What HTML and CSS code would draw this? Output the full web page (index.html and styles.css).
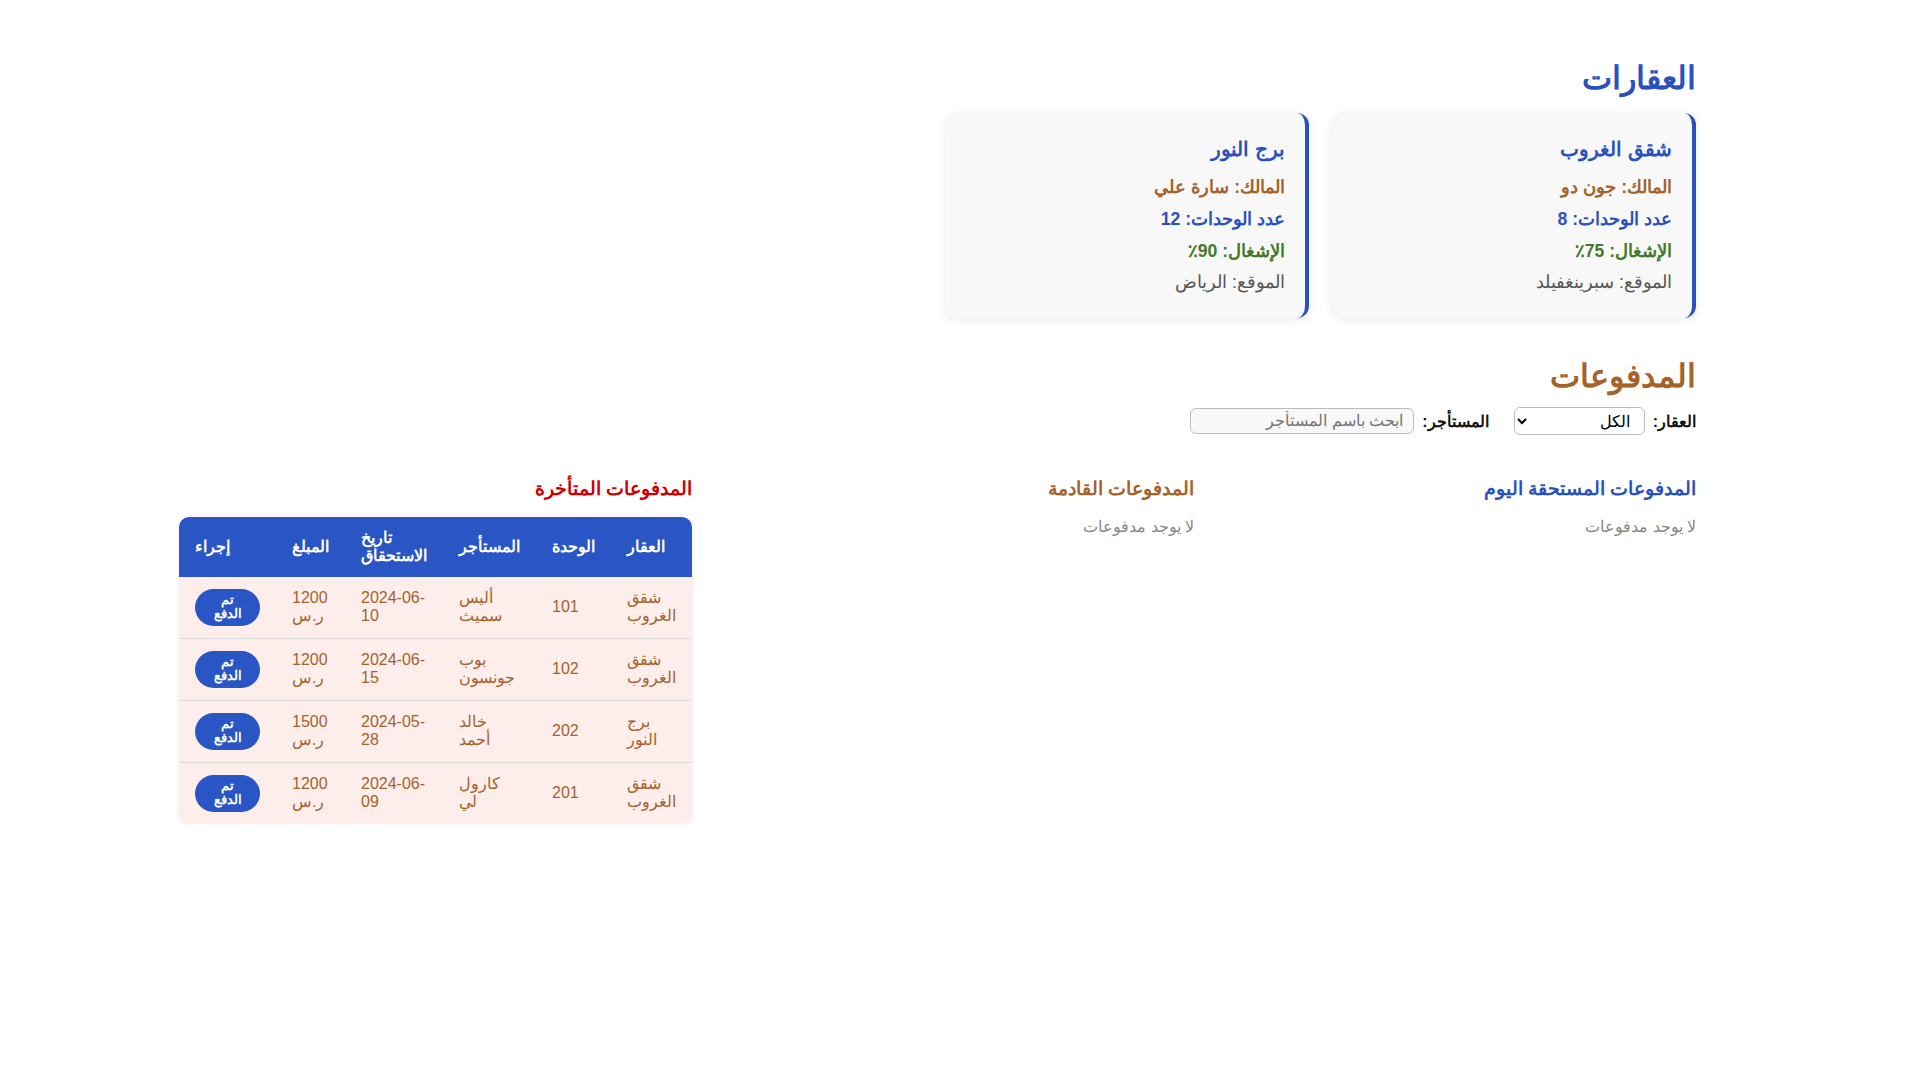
FILE: index.html
```html
<!DOCTYPE html>
<html lang="ar" dir="rtl">
<head>
  <meta charset="UTF-8">
  <meta name="viewport" content="width=device-width, initial-scale=1.0">
  <title>إدارة العقارات</title>
  <link rel="stylesheet" href="styles.css">
</head>
<body>

  <div class="container">
    <!-- Properties -->
    <h1 class="page-title">العقارات</h1>
    <div class="property-list">
      <div class="property-card">
        <h3>شقق الغروب</h3>
        <p class="owner">المالك: جون دو</p>
        <p class="units">عدد الوحدات: 8</p>
        <p class="occupancy">الإشغال: 75٪</p>
        <p class="location">الموقع: سبرينغفيلد</p>
      </div>
      <div class="property-card">
        <h3>برج النور</h3>
        <p class="owner">المالك: سارة علي</p>
        <p class="units">عدد الوحدات: 12</p>
        <p class="occupancy">الإشغال: 90٪</p>
        <p class="location">الموقع: الرياض</p>
      </div>
    </div>

    <!-- Payments -->
    <h2 class="section-title">المدفوعات</h2>
    <div class="filters">
      <div class="filter">
        <label for="propertyFilter">العقار:</label>
        <select id="propertyFilter">
          <option>الكل</option>
          <option>شقق الغروب</option>
          <option>برج النور</option>
        </select>
      </div>
      <div class="filter">
        <label for="tenantSearch">المستأجر:</label>
        <input type="text" id="tenantSearch" placeholder="ابحث باسم المستأجر">
      </div>
    </div>

    <div class="payments-grid">
      <div class="payments-col">
        <h3 class="col-title due">المدفوعات المستحقة اليوم</h3>
        <p class="empty">لا يوجد مدفوعات</p>
      </div>
      <div class="payments-col">
        <h3 class="col-title upcoming">المدفوعات القادمة</h3>
        <p class="empty">لا يوجد مدفوعات</p>
      </div>
      <div class="payments-col">
        <h3 class="col-title overdue">المدفوعات المتأخرة</h3>
        <table class="payments-table">
          <thead>
            <tr>
              <th>العقار</th>
              <th>الوحدة</th>
              <th>المستأجر</th>
              <th>تاريخ الاستحقاق</th>
              <th>المبلغ</th>
              <th>إجراء</th>
            </tr>
          </thead>
          <tbody>
            <tr>
              <td>شقق الغروب</td>
              <td>101</td>
              <td>أليس سميث</td>
              <td>2024-06-10</td>
              <td>1200 ر.س</td>
              <td><button class="pay-btn">تم الدفع</button></td>
            </tr>
            <tr>
              <td>شقق الغروب</td>
              <td>102</td>
              <td>بوب جونسون</td>
              <td>2024-06-15</td>
              <td>1200 ر.س</td>
              <td><button class="pay-btn">تم الدفع</button></td>
            </tr>
            <tr>
              <td>برج النور</td>
              <td>202</td>
              <td>خالد أحمد</td>
              <td>2024-05-28</td>
              <td>1500 ر.س</td>
              <td><button class="pay-btn">تم الدفع</button></td>
            </tr>
            <tr>
              <td>شقق الغروب</td>
              <td>201</td>
              <td>كارول لي</td>
              <td>2024-06-09</td>
              <td>1200 ر.س</td>
              <td><button class="pay-btn">تم الدفع</button></td>
            </tr>
          </tbody>
        </table>
      </div>
    </div>
  </div>

</body>
</html>
```

FILE: styles.css
```css
body, html {
  margin: 0;
  padding: 0;
  font-family: Arial, sans-serif;
  background: #fff;
  color: #222;
}

.container {
  width: 1472px;
  margin: 0 auto;
  padding-top: 59px;
}

.page-title {
  margin: 0 0 16px;
  font-size: 32px;
  line-height: 1.2;
  color: #2a52be;
}

/* Property cards */
.property-list {
  display: flex;
  gap: 23px;
}

.property-card {
  width: 364px;
  box-sizing: border-box;
  padding: 20px 20px 16px;
  background: #f8f8f8;
  border-right: 4px solid #2a52be;
  border-radius: 12px;
  box-shadow: 0 2px 10px rgba(0, 0, 0, 0.08);
}

.property-card h3 {
  margin: 0 0 10px;
  font-size: 20.2px;
  line-height: 32px;
  color: #2a52be;
}

.property-card p {
  margin: 6px 0;
  font-size: 17.6px;
  line-height: 25.6px;
}

.owner {
  color: #a5622a;
  font-weight: bold;
}

.units {
  color: #2a52be;
  font-weight: bold;
}

.occupancy {
  color: #437a2a;
  font-weight: bold;
}

.location {
  color: #555;
}

/* Payments */
.section-title {
  margin: 39px 0 12px;
  font-size: 32px;
  line-height: 1.2;
  color: #a5622a;
}

.filters {
  display: flex;
  align-items: center;
  gap: 25px;
}

.filter {
  display: flex;
  align-items: center;
  gap: 8px;
}

.filter label {
  font-size: 16px;
  font-weight: bold;
  color: #111;
}

.filter select {
  width: 131px;
  height: 28px;
  box-sizing: border-box;
  padding: 0 10px 0 6px;
  font-family: inherit;
  font-size: 16px;
  border: 1px solid #bbb;
  border-radius: 6px;
  background: #fff;
}

.filter input {
  width: 224px;
  height: 26px;
  box-sizing: border-box;
  padding: 0 10px;
  font-family: inherit;
  font-size: 16px;
  border: 1px solid #bbb;
  border-radius: 6px;
  background: #f8f8f8;
}

.payments-grid {
  display: grid;
  grid-template-columns: repeat(3, minmax(0, 1fr));
  gap: 34px;
  margin-top: 43px;
  align-items: start;
}

.col-title {
  margin: 0 0 16px;
  font-size: 18.72px;
  line-height: 1.2;
}

.col-title.due {
  color: #2a52be;
}

.col-title.upcoming {
  color: #a5622a;
}

.col-title.overdue {
  color: #cc0000;
}

.empty {
  margin: 16px 0 0;
  font-size: 16px;
  line-height: 1.2;
  color: #888;
}

.payments-table {
  width: 100%;
  border-collapse: separate;
  border-spacing: 0;
  border-radius: 10px;
  overflow: hidden;
  box-shadow: 0 2px 6px rgba(0, 0, 0, 0.08);
}

.payments-table th,
.payments-table td {
  padding: 12px 16px;
  text-align: left;
  font-size: 16px;
  line-height: 18px;
}

.payments-table th {
  background: #2a55c4;
  color: #fff;
  font-weight: bold;
}

.payments-table td {
  background: #fdeeec;
  color: #a5622a;
  border-bottom: 1px solid #ddd;
}

.payments-table tr:last-child td {
  border-bottom: none;
}

.pay-btn {
  padding: 4.5px 18.5px;
  border: none;
  border-radius: 20px;
  background: #2a55c4;
  color: #fff;
  font-family: inherit;
  font-size: 13px;
  line-height: 14px;
  font-weight: bold;
  cursor: pointer;
}
```
